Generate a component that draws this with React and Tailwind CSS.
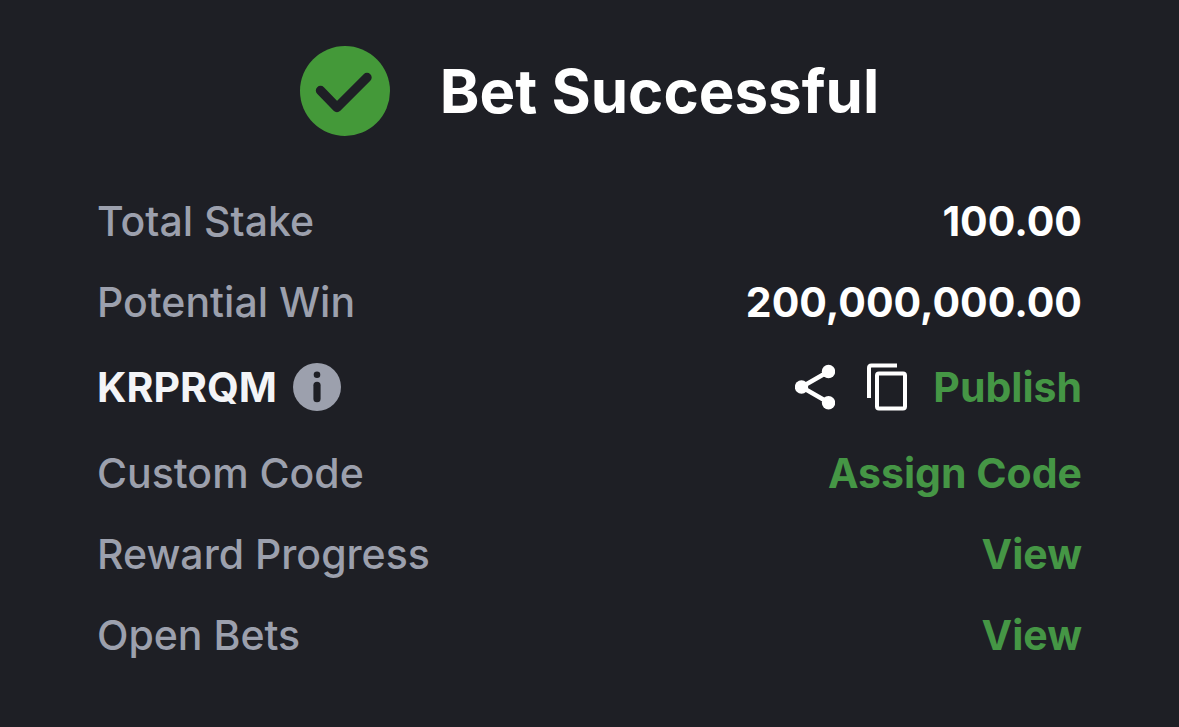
import React from "react";

const CheckIcon = () => (
  <svg viewBox="0 0 90 90" className="size-[90px] shrink-0" aria-hidden="true">
    <circle cx="45" cy="45" r="45" fill="#449939" />
    <path
      d="M20.5 44.5 37 61.5 67 31.5"
      fill="none"
      stroke="#1e1f25"
      strokeWidth="9.4"
      strokeLinecap="round"
      strokeLinejoin="round"
    />
  </svg>
);

const InfoIcon = () => (
  <svg viewBox="0 0 48 48" className="size-12">
    <circle cx="24" cy="24" r="24" fill="#9ca0ad" />
    <circle cx="24" cy="11.8" r="3.3" fill="#1e1f25" />
    <rect x="20.4" y="18.7" width="7.2" height="20.6" rx="3.6" fill="#1e1f25" />
  </svg>
);

const ShareIcon = () => (
  <svg viewBox="0 0 40 48" className="h-12 w-10" fill="white">
    <path
      d="M33.5 8.5 6.5 24 33.5 39.5"
      fill="none"
      stroke="white"
      strokeWidth="4.4"
    />
    <circle cx="6.5" cy="24" r="6.7" />
    <circle cx="33.5" cy="8.5" r="6.7" />
    <circle cx="33.5" cy="39.7" r="6.7" />
  </svg>
);

const CopyIcon = () => (
  <svg
    viewBox="0 0 40 48"
    className="h-12 w-10"
    fill="none"
    stroke="white"
    strokeWidth="4"
  >
    <path d="M2 35V5.1Q2 2.6 4.4 2.6H30" />
    <rect x="10" y="10.6" width="28" height="35" rx="2" />
  </svg>
);

const Row = ({ label, children }) => (
  <div className="flex h-[81px] items-center justify-between">
    <dt className="font-medium text-[#9ca0ad]">{label}</dt>
    <dd className="font-bold text-white">{children}</dd>
  </div>
);

const LinkButton = ({ children, ...props }) => (
  <button type="button" className="font-bold text-[#459645]" {...props}>
    {children}
  </button>
);

const App = () => {
  const code = "KRPRQM";

  const copyCode = () => {
    navigator.clipboard?.writeText(code);
  };

  const shareCode = () => {
    navigator.share?.({ text: code });
  };

  return (
    <main className="min-h-screen bg-[#1e1f25] px-[97px] pt-[46px] pb-12 font-['Inter',sans-serif]">
      <header className="flex items-center justify-center gap-[50px]">
        <CheckIcon />
        <h1 className="text-[60px] leading-[80px] font-bold text-white">
          Bet Successful
        </h1>
      </header>

      <dl className="mt-11 text-[41px] leading-[52px]">
        <Row label="Total Stake">100.00</Row>
        <Row label="Potential Win">200,000,000.00</Row>

        <div className="flex h-[90px] items-center justify-between">
          <dt className="flex items-center gap-4 font-bold text-[#f3f4f7]">
            {code}
            <button type="button" aria-label="Booking code info">
              <InfoIcon />
            </button>
          </dt>
          <dd className="flex items-center">
            <button type="button" aria-label="Share code" onClick={shareCode}>
              <ShareIcon />
            </button>
            <button
              type="button"
              aria-label="Copy code"
              className="ml-8 mr-[26px]"
              onClick={copyCode}
            >
              <CopyIcon />
            </button>
            <LinkButton>Publish</LinkButton>
          </dd>
        </div>

        <Row label="Custom Code">
          <LinkButton>Assign Code</LinkButton>
        </Row>
        <Row label="Reward Progress">
          <LinkButton aria-label="View reward progress">View</LinkButton>
        </Row>
        <Row label="Open Bets">
          <LinkButton aria-label="View open bets">View</LinkButton>
        </Row>
      </dl>
    </main>
  );
};

export default App;
